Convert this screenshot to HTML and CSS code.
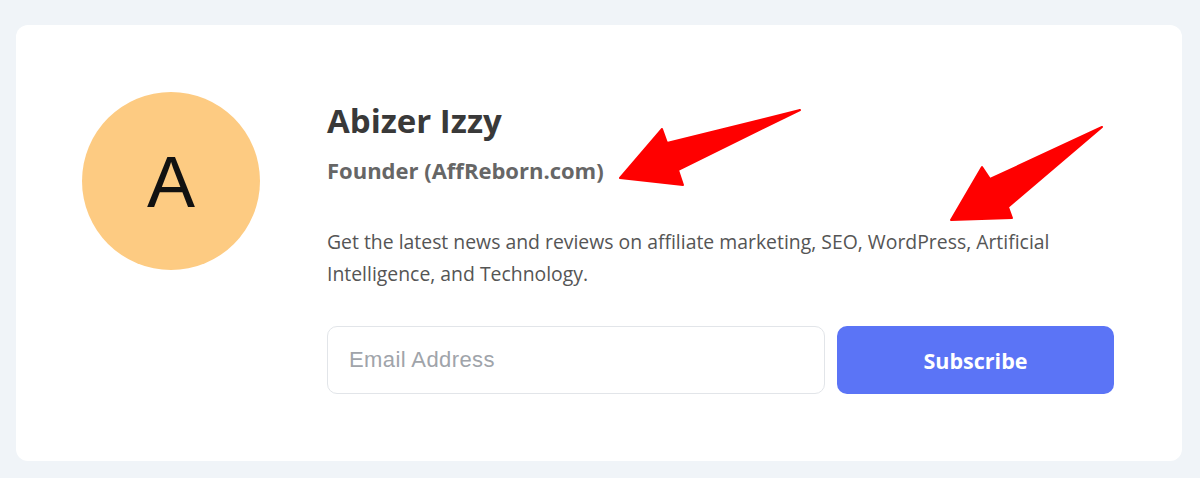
FILE: index.html
```html
<!DOCTYPE html>
<html lang="en">
<head>
<meta charset="utf-8">
<title>Author box</title>
<link rel="stylesheet" href="styles.css">
</head>
<body>
<main class="page">
  <section class="card">
    <div class="avatar"><span class="avatar-letter">A</span></div>
    <div class="content">
      <h2 class="name">Abizer Izzy</h2>
      <p class="role">Founder (AffReborn.com)</p>
      <p class="desc">Get the latest news and reviews on affiliate marketing, SEO, WordPress, Artificial Intelligence, and Technology.</p>
      <form class="form">
        <input class="email" type="email" placeholder="Email Address">
        <button class="btn" type="button">Subscribe</button>
      </form>
    </div>
  </section>
  <svg class="arrows" width="1200" height="478" viewBox="0 0 1200 478" aria-hidden="true">
    <polygon points="800,110 667,143 662,129 620,178 683,185 678,170" fill="#ff0000" stroke="#ff0000" stroke-width="2" stroke-linejoin="round"/>
    <polygon points="1102,127 990,179 982,167 951,220 1012,218 1008,207" fill="#ff0000" stroke="#ff0000" stroke-width="2" stroke-linejoin="round"/>
  </svg>
</main>
</body>
</html>
```

FILE: styles.css
```css
* { box-sizing: border-box; }
html, body { margin: 0; padding: 0; }
body {
  background: #f0f4f8;
  font-family: "Open Sans", "Noto Sans", sans-serif;
  width: 1200px;
  height: 478px;
  overflow: hidden;
}
.page {
  position: relative;
  width: 1200px;
  height: 478px;
  padding: 25px 18px 17px 16px;
}
.card {
  background: #ffffff;
  border-radius: 12px;
  height: 436px;
  display: flex;
  align-items: flex-start;
  gap: 67px;
  padding: 67px 68px 67px 66px;
}
.avatar {
  flex: 0 0 178px;
  width: 178px;
  height: 178px;
  border-radius: 50%;
  background: #fdcb82;
  display: flex;
  align-items: center;
  justify-content: center;
}
.avatar-letter {
  font-family: "Liberation Sans", Arial, sans-serif;
  font-size: 72px;
  line-height: 1;
  color: #111111;
  transform: translateY(1px);
}
.content {
  flex: 1;
  padding-top: 7px;
}
.name {
  margin: 0;
  font-size: 33px;
  line-height: 44px;
  font-weight: 700;
  color: #393939;
}
.role {
  margin: 12px 0 0;
  font-size: 22px;
  line-height: 30px;
  font-weight: 700;
  color: #666666;
}
.desc {
  margin: 41px 0 0;
  font-size: 19.4px;
  line-height: 32px;
  color: #555555;
}
.form {
  margin: 36px 0 0;
  display: flex;
  gap: 12px;
}
.email {
  flex: 0 0 498px;
  height: 68px;
  border: 1px solid #e2e5e9;
  border-radius: 10px;
  padding: 0 21px;
  font-family: "Liberation Sans", Arial, sans-serif;
  font-size: 22px;
  letter-spacing: 0.4px;
  color: #333;
  background: #ffffff;
  outline: none;
}
.email::placeholder { color: #a0a4aa; }
.btn {
  flex: 0 0 277px;
  height: 68px;
  border: none;
  border-radius: 10px;
  background: #5b74f6;
  color: #ffffff;
  font-family: "Open Sans", sans-serif;
  font-size: 21.5px;
  font-weight: 700;
}
.arrows {
  position: absolute;
  top: 0;
  left: 0;
  pointer-events: none;
}
```
